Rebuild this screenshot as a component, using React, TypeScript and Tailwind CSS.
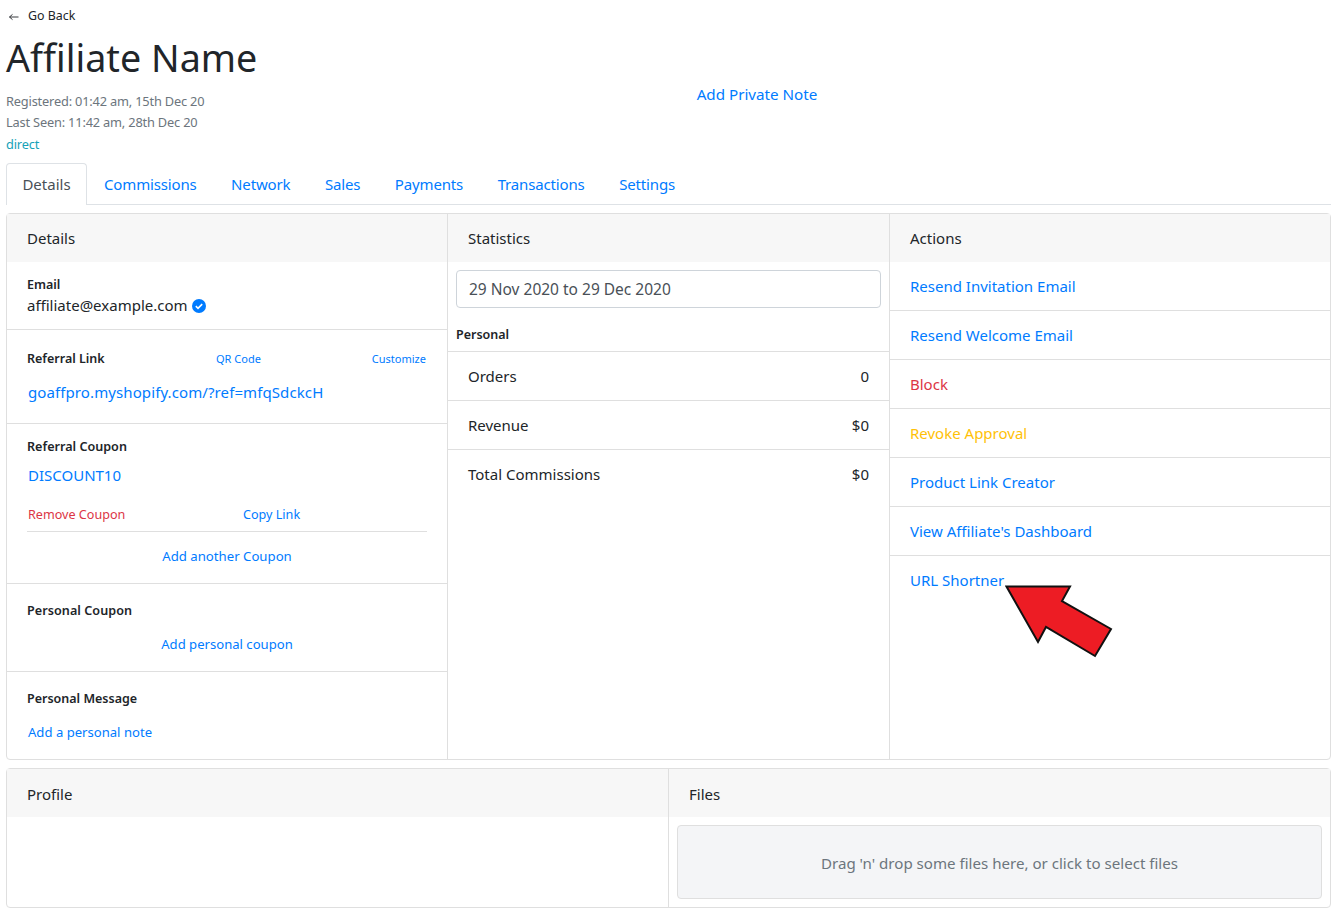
import React from 'react';

const font = { fontFamily: '"Noto Sans", sans-serif' };

const tabs = ['Commissions', 'Network', 'Sales', 'Payments', 'Transactions', 'Settings'];

const StatRow = ({ label, value }: { label: string; value: string }) => (
  <div className="flex h-[49px] items-center justify-between border-t border-[#dfdfdf] px-5 pt-[2px] text-[15px] text-[#212529]">
    <span>{label}</span>
    <span>{value}</span>
  </div>
);

const ActionRow = ({ label, color = 'text-[#007bff]', last = false }: { label: string; color?: string; last?: boolean }) => (
  <div className={`flex h-[49px] items-center px-5 text-[15px] ${color} ${last ? '' : 'border-b border-[#dfdfdf] pt-[2px]'}`}>{label}</div>
);

const CardHeader = ({ title, bottom = false }: { title: string; bottom?: boolean }) => (
  <div className={`flex h-[48px] items-center bg-[#f7f7f7] px-5 text-[15px] text-[#212529] ${bottom ? 'pt-[4px]' : 'pt-[2px]'}`}>{title}</div>
);

export default function App() {
  return (
    <div className="w-[1337px] h-[913px] overflow-hidden bg-white px-1.5" style={font}>
      {/* Header */}
      <div className="flex h-[31px] items-center pl-0.5 pt-[2px] text-[12.4px] text-[#212529]">
        <svg width="12" height="12" viewBox="0 0 16 16" fill="none" stroke="currentColor" strokeWidth="1.2" className="mr-2">
          <path d="M14 8H2M6 4.5 2 8l4 3.5" />
        </svg>
        Go Back
      </div>
      <h1 className="h-[54px] text-[37.7px] leading-[54px] text-[#212529]">Affiliate Name</h1>
      <div className="flex">
        <div className="w-[668px] pt-[6px] text-[12.8px] tracking-[-0.18px] text-[#6c757d]">
          <div className="leading-[21px]">Registered: 01:42 am, 15th Dec 20</div>
          <div className="leading-[21px]">Last Seen: 11:42 am, 28th Dec 20</div>
          <div className="leading-[22.5px] text-[#17a2b8]">direct</div>
        </div>
        <div className="-mt-[3px] w-[166px] text-center text-[15.2px] leading-[24px] text-[#007bff]">Add Private Note</div>
      </div>

      {/* Tabs */}
      <div className="mt-[7px] flex h-[42px] items-stretch border-b border-[#dee2e6] text-[15px]">
        <div className="flex w-[81px] items-center justify-center rounded-t border border-b-0 border-[#dee2e6] bg-white text-[#495057] -mb-px">Details</div>
        <div className="flex items-center gap-[34.5px] pl-[17px] pt-[2px] tracking-[-0.15px] text-[#007bff]">
          {tabs.map((t) => (
            <span key={t}>{t}</span>
          ))}
        </div>
      </div>

      {/* Main cards */}
      <div className="mt-2 flex h-[547px] rounded border border-[#dfdfdf]">
        <div className="w-[441px] border-r border-[#dfdfdf]">
          <CardHeader title="Details" />
          <div className="h-[68px] border-b border-[#dfdfdf] px-5 pt-[13px]">
            <div className="text-[12.5px] font-semibold leading-[20px] text-[#212529]">Email</div>
            <div className="-mt-px flex items-center text-[15px] leading-[22px] text-[#212529]">
              affiliate@example.com
              <svg width="14" height="14" viewBox="0 0 14 14" className="ml-[4px] mt-[2px]">
                <circle cx="7" cy="7" r="7" fill="#007bff" />
                <path d="M3.8 7.2 6 9.3l4.2-4.2" fill="none" stroke="#fff" strokeWidth="1.6" />
              </svg>
            </div>
          </div>
          <div className="h-[94px] border-b border-[#dfdfdf] px-5 pt-[18px]">
            <div className="flex items-center whitespace-nowrap leading-[22px]">
              <span className="w-[189px] shrink-0 text-[12.5px] font-semibold text-[#212529]">Referral Link</span>
              <span className="text-[11px] text-[#007bff]">QR Code</span>
              <span className="ml-auto mr-px text-[11px] text-[#007bff]">Customize</span>
            </div>
            <div className="mt-[11px] pl-px text-[15px] leading-[22px] tracking-[0.1px] text-[#007bff]">goaffpro.myshopify.com/?ref=mfqSdckcH</div>
          </div>
          <div className="h-[160px] border-b border-[#dfdfdf] px-5 pt-[12px]">
            <div className="text-[12.6px] font-semibold leading-[22px] text-[#212529]">Referral Coupon</div>
            <div className="mt-[5px] pl-px text-[15px] leading-[24px] text-[#007bff]">DISCOUNT10</div>
            <div className="mt-[18px] flex h-[27px] items-start border-b border-[#dfdfdf] text-[12.6px] leading-[20px]">
              <span className="w-1/2 pl-px text-[#dc3545]">Remove Coupon</span>
              <span className="w-[16px]" />
              <span className="text-[#007bff]">Copy Link</span>
            </div>
            <div className="mt-[14px] text-center text-[13.2px] leading-[20px] text-[#007bff]">Add another Coupon</div>
          </div>
          <div className="h-[88px] border-b border-[#dfdfdf] px-5 pt-[16px]">
            <div className="text-[12.6px] font-semibold leading-[22px] tracking-[0.05px] text-[#212529]">Personal Coupon</div>
            <div className="mt-[12px] text-center text-[13.1px] leading-[20px] text-[#007bff]">Add personal coupon</div>
          </div>
          <div className="px-5 pt-[16px]">
            <div className="text-[12.5px] font-semibold leading-[22px] text-[#212529]">Personal Message</div>
            <div className="mt-[12px] pl-px text-[13.1px] leading-[20px] text-[#007bff]">Add a personal note</div>
          </div>
        </div>

        <div className="w-[442px] border-r border-[#dfdfdf]">
          <CardHeader title="Statistics" />
          <div className="px-2 pt-2">
            <div className="flex h-[38px] items-center rounded border border-[#ced4da] px-3 pt-[2px] text-[15.5px] text-[#495057]">29 Nov 2020 to 29 Dec 2020</div>
          </div>
          <div className="flex h-[43px] items-center px-2 pt-[12px] text-[12.5px] font-semibold text-[#212529]">Personal</div>
          <StatRow label="Orders" value="0" />
          <StatRow label="Revenue" value="$0" />
          <StatRow label="Total Commissions" value="$0" />
        </div>

        <div className="relative flex-1">
          <CardHeader title="Actions" />
          <ActionRow label="Resend Invitation Email" />
          <ActionRow label="Resend Welcome Email" />
          <ActionRow label="Block" color="text-[#dc3545]" />
          <ActionRow label="Revoke Approval" color="text-[#ffc107]" />
          <ActionRow label="Product Link Creator" />
          <ActionRow label="View Affiliate's Dashboard" />
          <ActionRow label="URL Shortner" last />
          <svg width="112" height="76" viewBox="0 0 112 76" className="absolute left-[115px] top-[371px]">
            <path d="M1.5 1.5H65L57 16l49 28-16 27-49-29-8 15z" fill="#ed1c24" stroke="#111" strokeWidth="2" />
          </svg>
        </div>
      </div>

      {/* Bottom cards */}
      <div className="mt-2 flex h-[140px] rounded border border-[#dfdfdf]">
        <div className="w-[662px] border-r border-[#dfdfdf]">
          <CardHeader title="Profile" bottom />
        </div>
        <div className="flex-1">
          <CardHeader title="Files" bottom />
          <div className="p-2">
            <div className="flex h-[74px] items-center justify-center rounded border border-[#dfdfdf] bg-[#f4f5f7] pt-[4px] text-[15.1px] text-[#6c757d]">
              Drag 'n' drop some files here, or click to select files
            </div>
          </div>
        </div>
      </div>
    </div>
  );
}
